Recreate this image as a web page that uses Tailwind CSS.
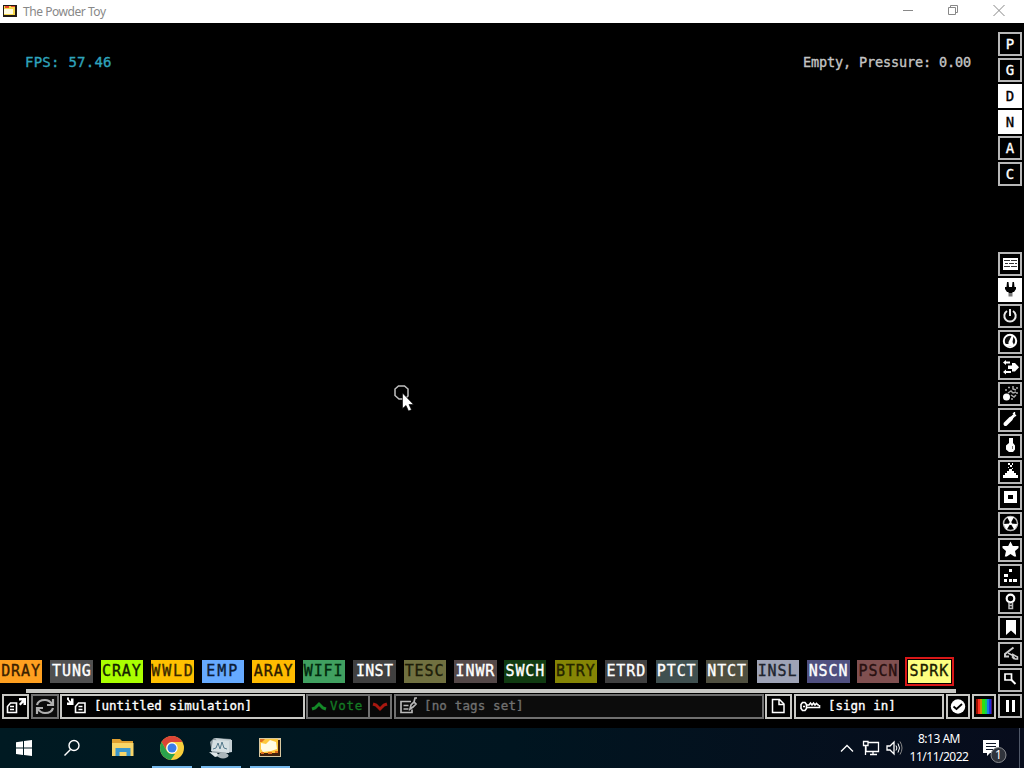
<!DOCTYPE html>
<html lang="en">
<head>
  <meta charset="UTF-8" />
  <title>The Powder Toy</title>
  <script src="https://cdn.jsdelivr.net/npm/@tailwindcss/browser@4"></script>
</head>
<body class="w-[1024px] h-[768px] overflow-hidden bg-black flex flex-col font-['Noto_Sans',sans-serif]">
  <!-- Title bar -->
  <div class="h-[23px] shrink-0 bg-white flex items-center text-[#888888]">
    <svg class="w-4 h-3 ml-[2px] mb-px" viewBox="0 0 16 12" shape-rendering="crispEdges">
      <path fill="#221a14" d="M1 0h14v12H1z"/>
      <path fill="#f7d84a" d="M2 1h11v9H2z"/>
      <path fill="#e8452c" d="M3 1h4v2H3zM9 1h4v1H9z"/>
      <path fill="#fffbe0" d="M2 4h9v5H2z"/>
    </svg>
    <span class="ml-[5px] text-[12px] tracking-[-0.45px]">The Powder Toy</span>
    <svg class="ml-auto w-[124px] h-[23px]" viewBox="900 0 124 23" fill="none" stroke="#888888">
      <path d="M903 10.5h10"/>
      <path d="M948.5 7.5h7v7h-7zM950.5 7.5v-2h7v7h-2"/>
      <path d="M993.5 5l11 11M1004.5 5l-11 11"/>
    </svg>
  </div>

  <!-- Game window -->
  <div class="h-[705px] shrink-0 flex font-['DejaVu_Sans_Mono',monospace] [-webkit-text-stroke:0.35px]">
    <div class="w-[998px] flex flex-col">
      <!-- HUD -->
      <div class="flex justify-between pt-[29px] pl-[25px] pr-[27px] text-[14px] leading-5">
        <span class="text-[#2fa4bd] tracking-[0.25px]">FPS: 57.46</span>
        <span class="text-[#c4c4c4] text-[13.5px] tracking-[-0.13px]">Empty, Pressure: 0.00</span>
      </div>

      <!-- Elements -->
      <div class="mt-auto h-[23px] flex text-[15px] leading-[23px] tracking-[0.9px] text-center whitespace-nowrap">
        <div class="w-[50.45px] shrink-0"><div class="w-[42px] h-[23px] overflow-hidden bg-[#ffa020] text-[#3a2000]">DRAY</div></div>
        <div class="w-[50.45px] shrink-0"><div class="w-[43px] h-[23px] overflow-hidden bg-[#505050] text-white">TUNG</div></div>
        <div class="w-[50.45px] shrink-0"><div class="w-[42px] h-[23px] overflow-hidden bg-[#aaff00] text-[#142200]">CRAY</div></div>
        <div class="w-[50.45px] shrink-0"><div class="w-[43px] h-[23px] overflow-hidden bg-[#ffc000] text-[#3a2800] tracking-[1.8px]">WWLD</div></div>
        <div class="w-[50.45px] shrink-0"><div class="w-[42px] h-[23px] overflow-hidden bg-[#66aaff] text-[#0c1c34] tracking-[2px]">EMP</div></div>
        <div class="w-[50.45px] shrink-0"><div class="w-[43px] h-[23px] overflow-hidden bg-[#ffbb00] text-[#2c1c00]">ARAY</div></div>
        <div class="w-[50.45px] shrink-0"><div class="w-[42px] h-[23px] overflow-hidden bg-[#40a060] text-[#00280c]">WIFI</div></div>
        <div class="w-[50.45px] shrink-0"><div class="w-[43px] h-[23px] overflow-hidden bg-[#404040] text-white tracking-[0.3px]">INST</div></div>
        <div class="w-[50.45px] shrink-0"><div class="w-[42px] h-[23px] overflow-hidden bg-[#707040] text-[#1c1c08]">TESC</div></div>
        <div class="w-[50.45px] shrink-0"><div class="w-[43px] h-[23px] overflow-hidden bg-[#544848] text-white">INWR</div></div>
        <div class="w-[50.45px] shrink-0"><div class="w-[42px] h-[23px] overflow-hidden bg-[#103b11] text-white">SWCH</div></div>
        <div class="w-[50.45px] shrink-0"><div class="w-[42px] h-[23px] overflow-hidden bg-[#858505] text-[#242400]">BTRY</div></div>
        <div class="w-[50.45px] shrink-0"><div class="w-[42px] h-[23px] overflow-hidden bg-[#404040] text-white">ETRD</div></div>
        <div class="w-[50.45px] shrink-0"><div class="w-[42px] h-[23px] overflow-hidden bg-[#405050] text-white">PTCT</div></div>
        <div class="w-[50.45px] shrink-0"><div class="w-[42px] h-[23px] overflow-hidden bg-[#505040] text-white">NTCT</div></div>
        <div class="w-[50.45px] shrink-0"><div class="w-[42px] h-[23px] overflow-hidden bg-[#9ea3b6] text-[#20242e]">INSL</div></div>
        <div class="w-[50.45px] shrink-0"><div class="w-[43px] h-[23px] overflow-hidden bg-[#505080] text-white">NSCN</div></div>
        <div class="w-[50.45px] shrink-0"><div class="w-[42px] h-[23px] overflow-hidden bg-[#805050] text-[#281010]">PSCN</div></div>
        <div class="w-[50.45px] shrink-0"><div class="w-[43px] h-[23px] bg-[#ffff80] text-[#1c1c00] outline-2 outline-offset-1 outline-[#d81818]">SPRK</div></div>
      </div>

      <!-- Scroll indicator -->
      <div class="mt-[6px] ml-[26px] w-[930px] h-1 shrink-0 bg-[#c8c8c4]"></div>

      <!-- Bottom toolbar -->
      <div class="mt-px mb-[9px] ml-[2px] h-[25px] shrink-0 flex text-[12.5px] text-white">
        <div class="w-[27px] shrink-0 border-2 border-[#c8c8c4]">
          <svg class="w-[27px] h-[25px] -m-0.5" viewBox="0 0 27 25" fill="none" stroke="#fff" stroke-width="1.6">
            <path d="M5.5 18.5v-6l3-3.5h6v9.500zM8 12.5h4M8 15.500h4"/>
            <path d="M17 4h7v7h-2.500V8.500L18.500 11.500 17 10l3-3.500h-3z" fill="#fff" stroke="none"/>
          </svg>
        </div>
        <div class="ml-[2px] w-[28px] shrink-0 border-2 border-[#707070] bg-[#0c0c0c]">
          <svg class="w-[28px] h-[25px] -m-0.5" viewBox="0 0 28 25" fill="none" stroke="#b0b0b0" stroke-width="2.200">
            <path d="M6 11c1-4 4-5 8-5 3 0 5 1 7 4M22 5v6h-6M22 14c-1 4-4 5-8 5-3 0-5-1-7-4M6 20v-6h6"/>
          </svg>
        </div>
        <div class="ml-px w-[245px] shrink-0 border-2 border-[#c8c8c4] flex items-center">
          <svg class="w-[25px] h-[25px] shrink-0 ml-[2px]" viewBox="64 694 25 25" fill="none" stroke="#fff" stroke-width="1.6">
            <path d="M75.500 712.500v-6l3-3.500h6.500v9.500zM78.500 706.500h4M78.500 709.500h4"/>
            <path d="M67 697.500h2v2l2 2v-3h2.500v6.500H67v-2.500h2.500l-2.500-3z" fill="#fff" stroke="none"/>
          </svg>
          <span class="ml-[5px]">[untitled simulation]</span>
        </div>
        <div class="ml-px w-[64px] shrink-0 border-2 border-[#707070] bg-[#080808] flex items-center text-[#147a24]">
          <svg class="w-4 h-4 ml-[3px]" viewBox="0 0 16 16" fill="none" stroke="#148a28" stroke-width="3"><path d="M1 10l3-1 4-4 4 4 3 1"/></svg>
          <span class="ml-[3px] tracking-[0.7px]">Vote</span>
        </div>
        <div class="-ml-[2px] w-[24px] shrink-0 border-2 border-[#707070] bg-[#080808] flex items-center justify-center">
          <svg class="w-4 h-4" viewBox="0 0 16 16" fill="none" stroke="#a81810" stroke-width="3"><path d="M1 5l3 1 4 4 4-4 3-1"/></svg>
        </div>
        <div class="ml-[2px] w-[370px] shrink-0 border-2 border-[#707070] bg-[#0c0c0c] flex items-center text-[#707070]">
          <svg class="w-[20px] h-[25px] ml-[2px]" viewBox="398 694 20 25" fill="none" stroke="#b8b8b8" stroke-width="1.7">
            <path d="M411 701.500h-10v11h11v-3M403.500 705.500h5M403.500 709h5"/>
            <path d="M410 709l1-4 3-3 2 2-3 3zM414 702l1-4h2"/>
          </svg>
          <span class="ml-[6px] tracking-[0.15px]">[no tags set]</span>
        </div>
        <div class="ml-px w-[27px] shrink-0 border-2 border-[#c8c8c4]">
          <svg class="w-[27px] h-[25px] -m-0.5" viewBox="0 0 27 25" fill="none" stroke="#fff" stroke-width="1.5">
            <path d="M7.500 5.500h7l4.500 4.500v8.500H7.500zM14 5.500v5h5"/>
          </svg>
        </div>
        <div class="ml-[2px] w-[150px] shrink-0 border-2 border-[#c8c8c4] flex items-center">
          <svg class="w-[22px] h-[13px] ml-[3px]" viewBox="0 0 22 13" fill="none" stroke="#fff" stroke-width="1.6">
            <path d="M6 2.500H3.500l-1.500 2v4l1.500 2H6l1.500-2v-4zM4 6.500h2M8 7.500h12.500V5M8 5h2l1.500-2L13 5l1.500-2L16 5l1.500-1.500L19 5h1"/>
          </svg>
          <span class="ml-[7px]">[sign in]</span>
        </div>
        <div class="ml-[2px] w-6 shrink-0 border-2 border-[#c8c8c4]">
          <svg class="w-6 h-[25px] -m-0.5" viewBox="0 0 24 25"><circle cx="12" cy="12.500" r="7.200" fill="#fff"/><path d="M7.500 12.500l3 2.500 5.500-5" fill="none" stroke="#000" stroke-width="1.800"/></svg>
        </div>
        <div class="ml-[2px] w-6 shrink-0 border-2 border-[#c8c8c4] flex items-center justify-center">
          <div class="w-4 h-[15px] flex">
            <div class="w-[2px] bg-[#a01000]"></div>
            <div class="w-[2px] bg-[#ff3020]"></div>
            <div class="w-[2px] bg-[#d09000]"></div>
            <div class="w-[3px] bg-[#30e010]"></div>
            <div class="w-[2px] bg-[#10d060]"></div>
            <div class="w-[2px] bg-[#1878e8]"></div>
            <div class="w-[2px] bg-[#2030d8]"></div>
            <div class="w-px bg-[#401070]"></div>
          </div>
        </div>
      </div>
    </div>

    <!-- Right column -->
    <div class="w-[24px] pt-[9px] flex flex-col">
      <div class="flex flex-col gap-[2px] text-[14px] leading-[21px] text-center text-white">
        <div class="h-6 border-2 border-[#b8b8b8]">P</div>
        <div class="h-6 border-2 border-[#b8b8b8]">G</div>
        <div class="h-6 border-2 border-white bg-white text-black">D</div>
        <div class="h-6 border-2 border-white bg-white text-black">N</div>
        <div class="h-6 border-2 border-[#b8b8b8]">A</div>
        <div class="h-6 border-2 border-[#b8b8b8]">C</div>
      </div>

      <!-- Element categories -->
      <div class="mt-[66px] h-[466px] flex flex-col justify-between">
        <div class="size-6 border-2 border-[#b8b8b8]">
          <svg class="size-6 -m-0.5" viewBox="0 0 24 24" shape-rendering="crispEdges"><path fill="#fff" d="M5 6h15v12H5z"/><path stroke="#333" d="M6 8.500h6M13 8.500h6M7 11.500h3M11 11.500h5M17 11.500h2M6 14.500h6M13 14.500h6"/></svg>
        </div>
        <div class="size-6 border-2 border-white bg-white">
          <svg class="size-6 -m-0.5" viewBox="0 0 24 24"><path d="M9 4h1.500l.5 5h3l.5-5H16l.5 5H18v2l-2 3h-1l-1 1h-3l-1-1H9l-2-3V9h1.500z"/><path fill="#777" d="M10.500 15h4v3.500h-4z"/></svg>
        </div>
        <div class="size-6 border-2 border-[#b8b8b8]">
          <svg class="size-6 -m-0.5" viewBox="0 0 24 24" fill="none" stroke="#e8e8e8" stroke-width="2"><path d="M9 7a5.700 5.700 0 1 0 6 0M12 5v7"/></svg>
        </div>
        <div class="size-6 border-2 border-[#b8b8b8]">
          <svg class="size-6 -m-0.5" viewBox="0 0 24 24"><circle cx="12" cy="11" r="6.200" fill="#111" stroke="#fff" stroke-width="2"/><path fill="#fff" d="M10.500 12l3-6h2l-1 6 2 4h-9v-2h3z"/></svg>
        </div>
        <div class="size-6 border-2 border-[#b8b8b8]">
          <svg class="size-6 -m-0.5" viewBox="0 0 24 24" fill="#fff"><path d="M5 6.500L8 4v1.500h4v2H8V9zM5 16l3-2.500V15h5v2H8v1.500zM10 9.500h4V7h3l4 4.300-4 4.200h-3v-2.500h-4z"/></svg>
        </div>
        <div class="size-6 border-2 border-[#b8b8b8]">
          <svg class="size-6 -m-0.5" viewBox="0 0 24 24"><circle cx="8.500" cy="15" r="3.500" fill="#fff"/><path stroke="#aaa" fill="none" stroke-width="1.500" d="M10 11l3-2 2 2 3-1M7 8h2M10 5.500h2M15 4v3l3 1M19 5v2M13 13l3 2 2-2M19 10v2M13 17h2"/></svg>
        </div>
        <div class="size-6 border-2 border-[#b8b8b8]">
          <svg class="size-6 -m-0.5" viewBox="0 0 24 24" fill="none" stroke="#fff"><path stroke-width="4" stroke-linecap="round" d="M7.500 16L13 10.500"/><path stroke-width="2.800" d="M12 11.500L16.500 7"/><path stroke-width="1.300" d="M15 5l3 3M16.500 6.500V4"/></svg>
        </div>
        <div class="size-6 border-2 border-[#b8b8b8]">
          <svg class="size-6 -m-0.5" viewBox="0 0 24 24"><path fill="#fff" d="M11 4h4v5l2 2.500v4L15 18h-4l-3-2.500v-4L11 9z"/><path stroke="#777" d="M14.500 12v3"/></svg>
        </div>
        <div class="size-6 border-2 border-[#b8b8b8]">
          <svg class="size-6 -m-0.5" viewBox="0 0 24 24" fill="#fff" shape-rendering="crispEdges"><path d="M10 3h2v2h-2zM14 3h1v2h-1zM12 5h2v2h-2zM10 7h1v1h-1zM14 8h1v1h-1zM11 9h3v2h2v2h2v2h2v3H5v-3h2v-2h2v-2h2z"/></svg>
        </div>
        <div class="size-6 border-2 border-[#b8b8b8]">
          <svg class="size-6 -m-0.5" viewBox="0 0 24 24" fill="none" stroke="#fff" stroke-width="4" shape-rendering="crispEdges"><path d="M8 7h9v8H8z"/></svg>
        </div>
        <div class="size-6 border-2 border-[#b8b8b8]">
          <svg class="size-6 -m-0.5" viewBox="0 0 24 24"><circle cx="12.500" cy="11.500" r="7" fill="none" stroke="#bbb" stroke-width="1.500"/><path fill="#fff" d="M12.500 11.500L9 5h7zM12.500 11.500l-7 .5 3 6zM12.500 11.500l7 .5-3 6z"/><circle cx="12.500" cy="11.500" r="1.500" fill="#fff"/></svg>
        </div>
        <div class="size-6 border-2 border-[#b8b8b8]">
          <svg class="size-6 -m-0.5" viewBox="0 0 24 24" fill="#fff"><path d="M12.500 3.500l2.300 4.500H20.500v2l-3.500 3 1.200 5.500h-2L12.500 16l-3.700 2.500h-2L8 13l-3.500-3V8h5.700z"/></svg>
        </div>
        <div class="size-6 border-2 border-[#b8b8b8]">
          <svg class="size-6 -m-0.5" viewBox="0 0 24 24" fill="#fff" shape-rendering="crispEdges"><path d="M11 5h3v3h-3zM6 10h4v3H6zM6 15h3v3H6zM11 15h3v3h-3zM15 15h4v3h-4z"/></svg>
        </div>
        <div class="size-6 border-2 border-[#b8b8b8]">
          <svg class="size-6 -m-0.5" viewBox="0 0 24 24" fill="none" stroke="#fff"><circle cx="12.500" cy="8.500" r="3.800" stroke-width="2.200"/><path stroke="#bbb" stroke-width="1.500" d="M11 12.500v6h3.500v-6M11 15.500h3"/></svg>
        </div>
        <div class="size-6 border-2 border-[#b8b8b8]">
          <svg class="size-6 -m-0.5" viewBox="0 0 24 24" fill="#fff"><path d="M8 4h10v15l-5-4.500L8 19z"/></svg>
        </div>
        <div class="size-6 border-2 border-[#b8b8b8]">
          <svg class="size-6 -m-0.5" viewBox="0 0 24 24" fill="none" stroke="#ccc"><path stroke-width="2" d="M15.500 5.500L7 12v2.500h4"/><path stroke-width="1.500" d="M10 11l4 2 3 4h2.500v-2L14 12M14 14.500l2 2.500"/></svg>
        </div>
        <div class="size-6 border-2 border-[#b8b8b8]">
          <svg class="size-6 -m-0.5" viewBox="0 0 24 24" fill="none" stroke="#fff"><path stroke-width="1.700" d="M7 6h6.500v6H7z"/><path stroke-width="2" d="M13 11.500l4.500 4.500"/></svg>
        </div>
        <div class="size-6 border-2 border-[#b8b8b8] flex items-center justify-center gap-[3px]">
          <div class="w-[3px] h-3 bg-white"></div>
          <div class="w-[3px] h-3 bg-white"></div>
        </div>
      </div>
    </div>
  </div>

  <!-- Taskbar -->
  <div class="h-10 shrink-0 flex items-center bg-linear-to-r from-[#001a22] via-[#001520] to-[#070c1c]">
    <svg class="w-[48px] h-10" viewBox="0 0 48 40" fill="#fff"><path d="M16 14.300l7-1v6.300h-7zM24 13.100l8-1.100v7.600h-8zM16 20.600h7v6.300l-7-1zM24 20.600h8V28l-8-1.100z"/></svg>
    <svg class="w-[50px] h-10" viewBox="48 0 50 40" fill="none" stroke="#fff" stroke-width="1.4"><circle cx="74" cy="17.500" r="5"/><path d="M70.500 21.500l-6 6"/></svg>
    <svg class="w-[54px] h-10" viewBox="98 0 54 40">
      <path fill="#e0a030" d="M112 11h8l2 2h11v6h-21z"/>
      <path fill="#f8d568" d="M112 15h21.500v13H112z"/>
      <path fill="#3a96cc" d="M115.500 20h15v8h-4v-4h-7v4h-4z"/>
    </svg>
    <div class="w-10 h-10 border-b-2 border-[#76b9ed] flex justify-center items-center">
      <svg class="size-6 mt-0.5" viewBox="0 0 24 24">
        <circle cx="12" cy="12" r="12" fill="#f9cf3c"/>
        <path fill="#dc4436" d="M1.600 6A12 12 0 0 1 22.400 6H12a6 6 0 0 0-5.200 9z"/>
        <path fill="#2ba24c" d="M1.600 6l5.200 9A6 6 0 0 0 12 18h3l-4.300 5.900A12 12 0 0 1 1.600 6z"/>
        <circle cx="12" cy="12" r="5.700" fill="#fff"/>
        <circle cx="12" cy="12" r="4.500" fill="#3b7de8"/>
      </svg>
    </div>
    <div class="ml-[9px] w-10 h-10 border-b-2 border-[#76b9ed] flex justify-center items-center">
      <svg class="w-6 h-[22px] mt-0.5" viewBox="0 0 24 22">
        <path fill="#8f9ba0" d="M1 5l4-4 17 1v11l-6 3H3z"/>
        <path fill="#c5d0d4" d="M6 1l17 2v12l-6 1z"/>
        <path fill="#d5dfe2" d="M4 3l16 1v12L2 14z"/>
        <path fill="none" stroke="#557a8c" d="M4 12l3-1 2-5 2 6 2-7 2 6 3 1"/>
        <path fill="#dfe8ea" d="M0 15l8 1 2 3-4 1z"/>
        <ellipse cx="14" cy="18.500" rx="5.500" ry="3" fill="#aab6ba"/>
      </svg>
    </div>
    <div class="ml-[9px] w-10 h-10 border-b-2 border-[#76b9ed] flex justify-center items-center">
      <svg class="w-[22px] h-[19px]" viewBox="0 0 22 19">
        <path fill="#d8c8a0" d="M0 0h22v19H0z"/>
        <path fill="#40200c" d="M1 15h20v3H1zM19 2h2v16h-2z"/>
        <path fill="#ffc83c" d="M1 1h18v14H1z"/>
        <path fill="#fffbe4" d="M2 5l5 1 4-4 6 2 1 7-6 2-8 1-2-3z"/>
        <path fill="#e07020" d="M1 1h5L3 4H1zM2 14h3v2H2zM9 14h4v2H9zM16 13h3v2h-3z"/>
      </svg>
    </div>

    <!-- Tray -->
    <svg class="ml-auto w-[70px] h-10" viewBox="836 0 70 40" fill="none" stroke="#fff" stroke-width="1.3">
      <path d="M841 23.500l6-6 6 6"/>
      <path d="M868 14.500h10.500v9H866v-5M863.500 13.500h4.500v4h-4.500zM865.500 18v9M870 26.500h7M873 23.500v3"/>
      <path d="M887 18h3l4-4v12l-4-4h-3z"/>
      <path d="M896 17.500q1.800 2.500 0 5M898 15.500q3 4.500 0 9" stroke-width="1"/>
      <path d="M900 13.500q4 6.500 0 13" stroke="#888" stroke-width="1"/>
    </svg>
    <div class="w-[66px] text-center text-[12px] leading-[18px] tracking-[-0.5px] text-white whitespace-nowrap">
      <div>8:13 AM</div>
      <div>11/11/2022</div>
    </div>
    <svg class="w-[52px] h-10 font-['Noto_Sans',sans-serif]" viewBox="972 0 52 40">
      <path fill="#fff" d="M983 12h16v13h-9l-3 3v-3h-4z"/>
      <path stroke="#101828" d="M986 15.500h10M986 18.500h10M986 21.500h7"/>
      <circle cx="998.500" cy="27" r="7.500" fill="#30343c" stroke="#8a8c90"/>
      <text x="998.500" y="31.300" text-anchor="middle" fill="#fff" font-size="12">1</text>
      <path stroke="#505868" d="M1019.500 0v40"/>
    </svg>
  </div>

  <!-- Brush and pointer -->
  <svg class="absolute left-[390px] top-[380px] w-[30px] h-[36px]" viewBox="390 380 30 36">
    <path fill="none" stroke="#c0c0c0" stroke-width="1.5" d="M398.500 386h6l3.500 3v7l-3 3h-6l-4-3.500V389z"/>
    <path fill="#fff" stroke="#000" stroke-width=".6" d="M402.500 393v15.500l3.500-3 2.500 5.500 3-1.200-2.500-5.300h4.500z"/>
  </svg>
</body>
</html>
